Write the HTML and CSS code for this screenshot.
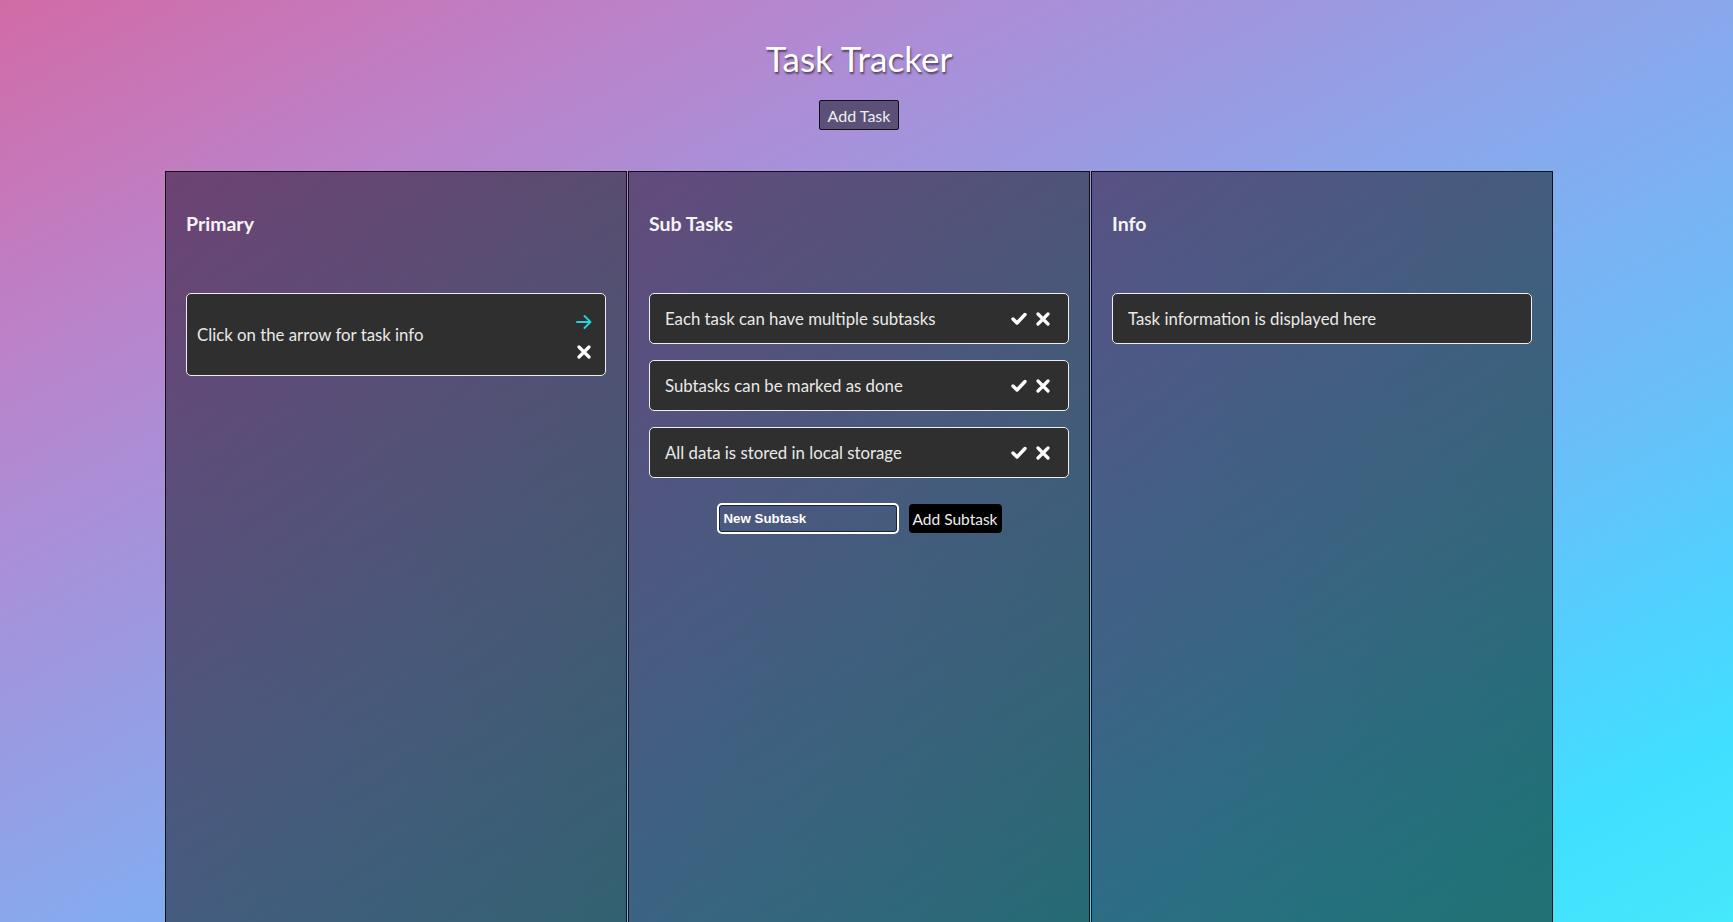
FILE: index.html
```html
<!DOCTYPE html>
<html lang="en">
<head>
<meta charset="utf-8">
<title>Task Tracker</title>
<link rel="stylesheet" href="styles.css">
</head>
<body>
<header class="header">
  <h1 class="title">Task Tracker</h1>
  <button class="add-task">Add Task</button>
</header>
<main class="board">
  <section class="column">
    <h3 class="column-title">Primary</h3>
    <div class="card card-primary">
      <span class="card-text">Click on the arrow for task info</span>
      <div class="stack-icons">
        <svg class="icon-arrow" viewBox="0 0 16 14" width="16" height="14"><path d="M1 7H14.5M8.5 1L14.5 7L8.5 13" fill="none" stroke="#1fd9dc" stroke-width="1.8" stroke-linecap="round" stroke-linejoin="round"/></svg>
        <svg class="icon-x" viewBox="0 0 14 14" width="14" height="14"><path d="M2 2L12 12M12 2L2 12" fill="none" stroke="#fff" stroke-width="3.2" stroke-linecap="round"/></svg>
      </div>
    </div>
  </section>
  <section class="column">
    <h3 class="column-title">Sub Tasks</h3>
    <div class="subtasks">
      <div class="card card-sub">
        <span class="card-text">Each task can have multiple subtasks</span>
        <div class="row-icons">
          <svg viewBox="0 0 16 13" width="16" height="13"><path d="M2 7L6 11L14 2.5" fill="none" stroke="#fff" stroke-width="3.4" stroke-linecap="round" stroke-linejoin="round"/></svg>
          <svg viewBox="0 0 14 14" width="14" height="14"><path d="M2 2L12 12M12 2L2 12" fill="none" stroke="#fff" stroke-width="3.2" stroke-linecap="round"/></svg>
        </div>
      </div>
      <div class="card card-sub">
        <span class="card-text">Subtasks can be marked as done</span>
        <div class="row-icons">
          <svg viewBox="0 0 16 13" width="16" height="13"><path d="M2 7L6 11L14 2.5" fill="none" stroke="#fff" stroke-width="3.4" stroke-linecap="round" stroke-linejoin="round"/></svg>
          <svg viewBox="0 0 14 14" width="14" height="14"><path d="M2 2L12 12M12 2L2 12" fill="none" stroke="#fff" stroke-width="3.2" stroke-linecap="round"/></svg>
        </div>
      </div>
      <div class="card card-sub">
        <span class="card-text">All data is stored in local storage</span>
        <div class="row-icons">
          <svg viewBox="0 0 16 13" width="16" height="13"><path d="M2 7L6 11L14 2.5" fill="none" stroke="#fff" stroke-width="3.4" stroke-linecap="round" stroke-linejoin="round"/></svg>
          <svg viewBox="0 0 14 14" width="14" height="14"><path d="M2 2L12 12M12 2L2 12" fill="none" stroke="#fff" stroke-width="3.2" stroke-linecap="round"/></svg>
        </div>
      </div>
    </div>
    <div class="new-subtask">
      <input class="subtask-input" type="text" value="New Subtask" autofocus>
      <button class="add-subtask">Add Subtask</button>
    </div>
  </section>
  <section class="column">
    <h3 class="column-title">Info</h3>
    <div class="card card-sub">
      <span class="card-text">Task information is displayed here</span>
    </div>
  </section>
</main>
</body>
</html>
```
FILE: styles.css
```css
* { box-sizing: border-box; }
html, body { height: 100%; }
body {
  margin: 0;
  min-height: 100vh;
  overflow: hidden;
  font-family: Lato, "Open Sans", sans-serif;
  color: #e9e9e9;
  background: linear-gradient(to bottom right, #d16ba5 0%, #c777b9 10%, #ba83ca 20%, #aa8fd8 30%, #9a9ae1 40%, #8aa7ec 50%, #79b3f4 60%, #69bff8 70%, #52cffe 80%, #41dfff 90%, #46e8fb 100%);
}
.header {
  display: flex;
  flex-direction: column;
  align-items: center;
  padding-top: 39px;
  padding-right: 15px;
}
.title {
  margin: 0;
  font-size: 35px;
  line-height: 38px;
  font-weight: 400;
  color: #fff;
  text-shadow: 1px 2px 2px rgba(0,0,0,0.55);
}
.add-task {
  margin-top: 23px;
  width: 80px;
  height: 30px;
  padding: 0;
  background: #5b5078;
  border: 1px solid #111;
  border-radius: 2px;
  color: #eee;
  font-family: inherit;
  font-size: 16px;
}
.board {
  display: flex;
  gap: 1px;
  margin: 41px 0 0 165px;
  height: 800px;
}
.column {
  width: 462px;
  border: 1px solid #111;
  padding: 20px;
  background: linear-gradient(to bottom right, rgba(30, 14, 44, 0.52), rgba(14, 24, 26, 0.54) 55%, rgba(4, 26, 6, 0.56));
}
.column-title {
  margin: 20px 0 0;
  font-size: 19.5px;
  line-height: 24px;
  font-weight: 700;
  color: #f4f4f4;
}
.card {
  background: #2f2f2f;
  border: 1px solid #eee;
  border-radius: 5px;
  font-size: 16.8px;
  line-height: 19px;
}
.card-primary {
  margin-top: 57px;
  height: 83px;
  display: flex;
  align-items: center;
  justify-content: space-between;
  padding: 0 13px 0 10px;
}
.stack-icons {
  display: flex;
  flex-direction: column;
  align-items: center;
  gap: 16px;
  padding-top: 4px;
}
.subtasks {
  margin-top: 57px;
  display: flex;
  flex-direction: column;
  gap: 16px;
}
.card-sub {
  display: flex;
  align-items: center;
  justify-content: space-between;
  padding: 15px 18px 15px 15px;
}
.column > .card-sub { margin-top: 57px; }
.row-icons {
  display: flex;
  gap: 9px;
  align-items: center;
}
.new-subtask {
  display: flex;
  justify-content: center;
  align-items: center;
  gap: 10px;
  margin-top: 25px;
}
.subtask-input {
  width: 182px;
  height: 31px;
  border: 2px solid #fff;
  box-shadow: inset 0 0 0 1px #1c2233;
  outline: none;
  border-radius: 5px;
  background: transparent;
  color: #fff;
  caret-color: #fff;
  font-family: "Liberation Sans", Arial, sans-serif;
  font-weight: 700;
  font-size: 13.3px;
  padding: 0 5px;
}
.subtask-input:focus { outline: none; }
.add-subtask {
  width: 93px;
  height: 29px;
  padding: 0;
  background: #000;
  border: none;
  border-radius: 4px;
  color: #eee;
  font-family: inherit;
  font-size: 15.5px;
}
```
